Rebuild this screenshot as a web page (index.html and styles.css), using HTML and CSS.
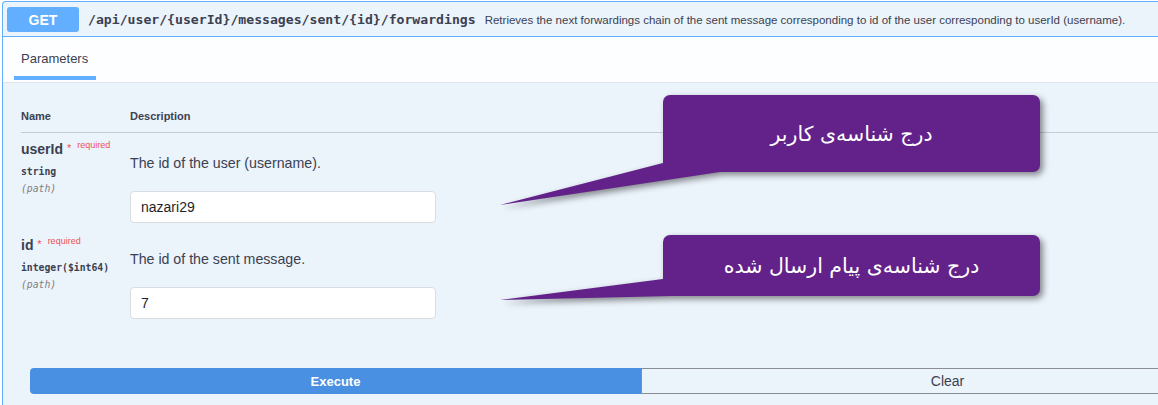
FILE: index.html
```html
<!DOCTYPE html>
<html lang="en">
<head>
<meta charset="utf-8">
<title>GET forwardings</title>
<link rel="stylesheet" href="styles.css">
</head>
<body>
<div class="opblock">
  <div class="summary">
    <span class="method">GET</span>
    <span class="path">/api/user/{userId}/messages/sent/{id}/forwardings</span>
    <span class="summary-desc">Retrieves the next forwardings chain of the sent message corresponding to id of the user corresponding to userId (username).</span>
  </div>
  <div class="tabs">
    <div class="tab">
      <span class="tab-label">Parameters</span>
      <span class="tab-bar"></span>
    </div>
  </div>
  <div class="params">
    <div class="thead">
      <div class="col-name">Name</div>
      <div class="col-desc">Description</div>
    </div>
    <div class="prow">
      <div class="col-name">
        <div class="pname">userId <span class="star">*</span><span class="req">required</span></div>
        <div class="ptype">string</div>
        <div class="pin">(path)</div>
      </div>
      <div class="col-desc">
        <div class="ptext">The id of the user (username).</div>
        <div class="pinput">nazari29</div>
      </div>
    </div>
    <div class="prow">
      <div class="col-name">
        <div class="pname">id <span class="star">*</span><span class="req">required</span></div>
        <div class="ptype">integer($int64)</div>
        <div class="pin">(path)</div>
      </div>
      <div class="col-desc">
        <div class="ptext">The id of the sent message.</div>
        <div class="pinput">7</div>
      </div>
    </div>
    <div class="actions">
      <button class="btn-exec">Execute</button>
      <button class="btn-clear">Clear</button>
    </div>
  </div>
</div>

<div class="overlay">
  <svg class="bubbles" width="1158" height="405" viewBox="0 0 1158 405" xmlns="http://www.w3.org/2000/svg">
    <path class="bubble" d="M670 95 H1033 A7 7 0 0 1 1040 102 V165 A7 7 0 0 1 1033 172 H720 L500 205 L663 163 V102 A7 7 0 0 1 670 95 Z"/>
    <path class="bubble" d="M670 235 H1033 A7 7 0 0 1 1040 242 V289 A7 7 0 0 1 1033 296 H672 L500 300 L663 279 V242 A7 7 0 0 1 670 235 Z"/>
  </svg>
  <div class="note note-1" dir="rtl">درج شناسه‌ی کاربر</div>
  <div class="note note-2" dir="rtl">درج شناسه‌ی پیام ارسال شده</div>
</div>
</body>
</html>
```

FILE: styles.css
```css
html, body {
  margin: 0;
  padding: 0;
  overflow: hidden;
  width: 1158px;
  height: 405px;
  background: #ffffff;
}

body {
  position: relative;
  font-family: "Liberation Sans", Arial, sans-serif;
  color: #3b4151;
}

.opblock {
  margin: 1px 0 0 2px;
  border: 1px solid #61affe;
  border-right: none;
  border-bottom: none;
  border-radius: 4px 0 0 0;
  background: #ebf3fb;
  height: 404px;
  box-sizing: border-box;
  overflow: hidden;
}

.summary {
  display: flex;
  align-items: center;
  padding: 5px 4px 4px 4px;
  border-bottom: 1px solid #61affe;
  white-space: nowrap;
  overflow: hidden;
}

.method {
  display: flex;
  align-items: center;
  justify-content: center;
  flex: none;
  width: 72px;
  height: 25px;
  border-radius: 3px;
  background: #61affe;
  color: #ffffff;
  font-weight: 700;
  font-size: 14px;
  margin-right: 9px;
}

.path {
  font-family: "DejaVu Sans Mono", "Liberation Mono", monospace;
  font-size: 13.15px;
  font-weight: 600;
  color: #3b4151;
  margin-right: 9px;
}

.summary-desc {
  font-size: 11.5px;
  color: #3b4151;
}

.tabs {
  background: #fdfeff;
  height: 46px;
  border-bottom: 1px solid #e2e6ea;
  padding-left: 11px;
  box-sizing: border-box;
}

.tab {
  display: inline-flex;
  flex-direction: column;
  width: 82px;
  padding-top: 14px;
}

.tab-label {
  padding-left: 7px;
  font-size: 13px;
  line-height: 16px;
  color: #3b4151;
}

.tab-bar {
  display: block;
  height: 4px;
  margin-top: 9px;
  background: #61affe;
}

.params {
  padding: 26px 0 0 18px;
}

.thead {
  display: flex;
  font-size: 11px;
  font-weight: 700;
  line-height: 14px;
  padding-bottom: 9px;
  border-bottom: 1px solid #c6ccd4;
}

.col-name {
  width: 109px;
  flex: none;
}

.col-desc {
  flex: 1;
}

.prow {
  display: flex;
  padding-top: 8px;
}

.prow + .prow {
  padding-top: 14px;
}

.pname {
  font-size: 14px;
  font-weight: 700;
  line-height: 16px;
  white-space: nowrap;
}

.star {
  color: #f0505a;
  font-size: 11px;
  font-weight: 400;
  position: relative;
  top: -2px;
}

.req {
  color: #f0505a;
  font-size: 9px;
  font-weight: 400;
  margin-left: 6px;
  position: relative;
  top: -6px;
}

.ptype {
  margin-top: 4px;
  font-family: "DejaVu Sans Mono", "Liberation Mono", monospace;
  font-size: 9.75px;
  font-weight: 600;
  line-height: 17px;
  color: #3b4151;
}

.pin {
  font-family: "DejaVu Sans Mono", "Liberation Mono", monospace;
  font-size: 9.75px;
  font-style: italic;
  line-height: 17px;
  color: #808080;
}

.ptext {
  padding-top: 14px;
  font-size: 14.2px;
  line-height: 16px;
  color: #3b4151;
}

.pinput {
  margin-top: 20px;
  width: 306px;
  height: 32px;
  box-sizing: border-box;
  background: #ffffff;
  border: 1px solid #d9dde2;
  border-radius: 4px;
  padding-left: 10px;
  display: flex;
  align-items: center;
  font-size: 14px;
  color: #1f1f1f;
}

.actions {
  display: flex;
  margin: 49px 0 0 9px;
  height: 26px;
}

.btn-exec,
.btn-clear {
  height: 26px;
  margin: 0;
  font-family: "Liberation Sans", Arial, sans-serif;
  cursor: pointer;
}

.btn-exec {
  flex: none;
  width: 611px;
  background: #4990e2;
  color: #ffffff;
  font-size: 13px;
  font-weight: 700;
  border: none;
  border-radius: 4px 0 0 4px;
}

.btn-clear {
  flex: 1;
  padding-left: 101px;
  background: transparent;
  color: #3b4151;
  font-size: 14px;
  border: 1px solid #8a8d92;
  border-right: none;
}

.overlay {
  position: absolute;
  left: 0;
  top: 0;
  width: 1158px;
  height: 405px;
  pointer-events: none;
}

.bubbles {
  position: absolute;
  left: 0;
  top: 0;
}

.bubble {
  fill: #63228a;
  filter: drop-shadow(3px 3px 3px rgba(0, 0, 0, 0.45));
}

.note {
  position: absolute;
  left: 663px;
  width: 377px;
  display: flex;
  align-items: center;
  justify-content: center;
  color: #ffffff;
  font-family: "DejaVu Sans", "Noto Sans", sans-serif;
  font-size: 20.5px;
}

.note-1 {
  top: 95px;
  height: 77px;
}

.note-2 {
  top: 235px;
  height: 61px;
}
```
